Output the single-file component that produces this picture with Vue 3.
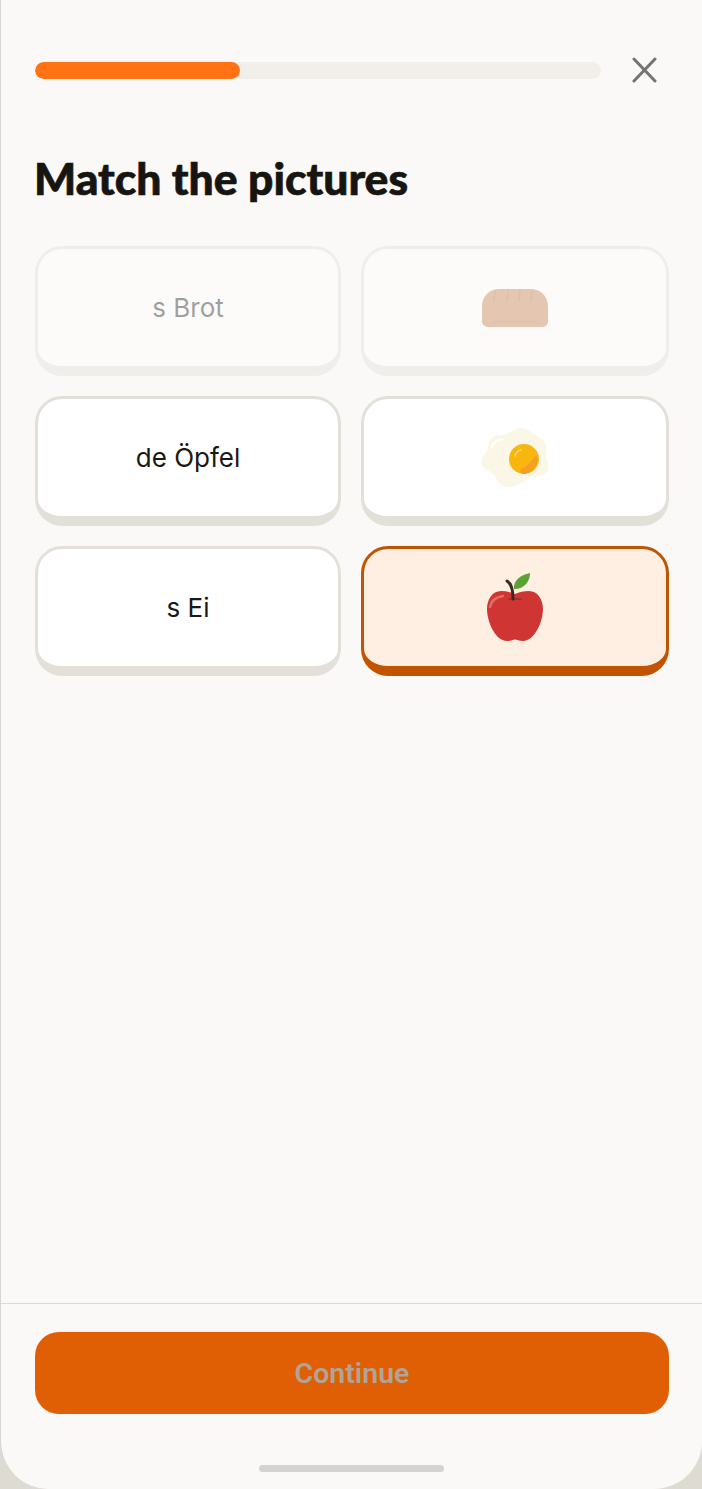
<template>
  <div class="frame">
    <div class="screen">
      <header class="top">
        <div class="track">
          <div class="fill" :style="{ width: progress + '%' }"></div>
        </div>
        <button class="close" aria-label="Close">
          <svg viewBox="0 0 25 26" width="25" height="26">
            <path d="M2 2 L23 24 M23 2 L2 24" stroke="#75736f" stroke-width="3" stroke-linecap="round" fill="none" />
          </svg>
        </button>
      </header>

      <main class="content">
        <h1>Match the pictures</h1>
        <div class="grid">
          <template v-for="row in rows" :key="row.word">
            <div class="card" :class="{ done: row.done }">{{ row.word }}</div>
            <div class="card" :class="{ done: row.done, active: row.active }">
              <svg v-if="row.pic === 'bread'" viewBox="0 0 68 40" width="68" height="40">
                <path d="M19 1 H49 C60 1 67 8 67 19 V33 C67 37 64 39 60 39 H8 C4 39 1 37 1 33 V19 C1 8 8 1 19 1 Z" fill="#c57d4b" />
                <path d="M14 3 L13 13 M27 2 L26 13 M39 2 L38 13 M51 3 L50 13" stroke="#ad6c3f" stroke-width="1.5" stroke-linecap="round" />
                <path d="M11 34 H58" stroke="#ad6c3f" stroke-width="1" />
              </svg>
              <svg v-else-if="row.pic === 'egg'" viewBox="0 0 70 62" width="70" height="62">
                <path d="M41 1 C48 1 52 6 58 10 C66 13 68 20 66 26 C65 31 69 36 68 42 C67 49 58 49 52 50 C45 52 40 60 28 60 C20 60 18 54 15 49 C11 43 1 42 1 35 C1 29 8 27 8 20 C8 11 15 8 22 8 C29 8 34 1 41 1 Z" fill="#faf7e6" />
                <path d="M12 20 C13 16 17 13 23 12" stroke="#fff" stroke-width="2" stroke-linecap="round" fill="none" />
                <circle cx="44" cy="32" r="15" fill="#f8b60f" />
                <path d="M57 28 C60 37 53 46 44 47 C39 47 39 43 43 41 C48 40 51 33 57 28 Z" fill="#f59e26" />
                <path d="M35 29 C36 26 38 24 41 23" stroke="#fcd96a" stroke-width="1.5" stroke-linecap="round" fill="none" />
              </svg>
              <svg v-else viewBox="0 0 56 69" width="56" height="69">
                <path d="M27 16 C26 8 33 2 43 0 C43 8 38 16 27 16 Z" fill="#5ba236" />
                <path d="M28 21 C24 19 19 18 14 18 C5 18 0 27 0 36 C0 48 8 68 20 68 C24 68 26 66.5 28 66.5 C30 66.5 32 68 36 68 C48 68 56 48 56 36 C56 27 51 18 42 18 C37 18 32 19 28 21 Z" fill="#cf3633" />
                <path d="M22 26 H34" stroke="#a82f2c" stroke-width="2" stroke-linecap="round" fill="none" />
                <path d="M26 26 C26 18 25 11 20 8" stroke="#3a2a24" stroke-width="3" stroke-linecap="round" fill="none" />
                <path d="M3 34 C4 28 9 24 16 23" stroke="#e76a64" stroke-width="2.5" stroke-linecap="round" fill="none" />
              </svg>
            </div>
          </template>
        </div>
      </main>

      <footer class="bottom">
        <button class="continue">Continue</button>
        <div class="home"></div>
      </footer>
    </div>
  </div>
</template>

<script setup>
const progress = 36.2;

const rows = [
  { word: "s Brot", pic: "bread", done: true },
  { word: "de Öpfel", pic: "egg" },
  { word: "s Ei", pic: "apple", active: true },
];
</script>

<style>
body {
  background: #dedbd2;
}
</style>

<style scoped>
.frame {
  height: 1489px;
  background: #dedbd2;
  overflow: hidden;
}

.screen {
  height: 1489px;
  box-sizing: border-box;
  background: #fbf9f7;
  border-left: 1px solid #d6d5d2;
  border-radius: 0 0 48px 48px;
  display: flex;
  flex-direction: column;
  font-family: Inter, "Liberation Sans", sans-serif;
}

.top {
  display: flex;
  align-items: center;
  gap: 31px;
  padding: 57px 45px 0 34px;
}

.track {
  flex: 1;
  height: 17px;
  border-radius: 9px;
  background: #f2efea;
  overflow: hidden;
}

.fill {
  height: 100%;
  border-radius: 9px;
  background: #ff7314;
}

.close {
  width: 25px;
  height: 26px;
  padding: 0;
  border: 0;
  background: none;
  display: block;
}

.close svg {
  display: block;
}

.content {
  flex: 1;
  padding: 0 34px;
}

h1 {
  margin: 69px 0 42px -1px;
  font-family: Lato, "Liberation Sans", sans-serif;
  font-weight: 900;
  font-size: 44.4px;
  line-height: 52px;
  color: #171511;
  -webkit-text-stroke: 0.7px #171511;
}

.grid {
  display: grid;
  grid-template-columns: 306px 308px;
  grid-auto-rows: 130px;
  gap: 20px;
}

.card {
  box-sizing: border-box;
  display: flex;
  align-items: center;
  justify-content: center;
  background: #fff;
  border: 3px solid #e2e0d9;
  border-bottom-width: 10px;
  border-radius: 27px;
  font-size: 26px;
  color: #1a1815;
}

.card.done {
  opacity: 0.4;
}

.card.active {
  background: #ffefe3;
  border-color: #c25303;
}

.bottom {
  display: flex;
  flex-direction: column;
  align-items: center;
  height: 186px;
  box-sizing: border-box;
  border-top: 1px solid #dcdbd8;
  padding: 28px 33px 0 34px;
}

.continue {
  width: 100%;
  height: 82px;
  border: 0;
  border-radius: 24px;
  background: #e05f05;
  color: #b0a496;
  font-family: Roboto, "Liberation Sans", sans-serif;
  font-weight: 600;
  font-size: 28.5px;
}

.home {
  width: 185px;
  height: 7px;
  margin: 51px 2px 0 0;
  border-radius: 4px;
  background: #d4d3d0;
}
</style>
